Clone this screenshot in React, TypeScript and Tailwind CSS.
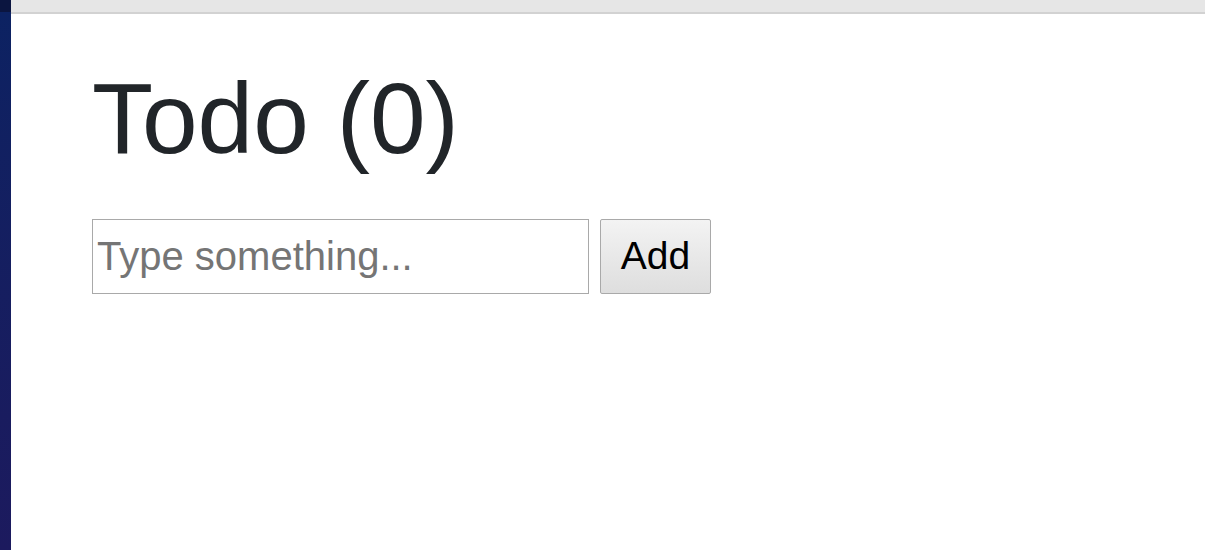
import { useState } from 'react';

// 간단한 Todo 화면 — 제목 + 입력 + 추가 버튼
export default function App(): JSX.Element {
  const [items, setItems] = useState<string[]>([]);
  const [text, setText] = useState<string>('');

  const handleAdd = (): void => {
    if (text.trim() === '') return;
    setItems([...items, text]);
    setText('');
  };

  return (
    <div className="flex w-[1205px] h-[550px] overflow-hidden bg-white font-['Liberation_Sans',Arial,sans-serif]">
      {/* 왼쪽 데스크톱 가장자리 */}
      <div className="w-[11px] shrink-0 flex flex-col">
        <div className="h-[12px] bg-[#0b1540]" />
        <div className="flex-1 bg-gradient-to-b from-[#0c2262] to-[#1c1a5e]" />
      </div>

      <div className="flex-1 flex flex-col">
        {/* 상단 브라우저 바 */}
        <div className="h-[12px] bg-[#e6e6e6]" />
        <div className="h-[2px] bg-[#d2d2d2]" />

        <main className="pl-[81px] pt-[54px]">
          <h1 className="text-[100px] leading-none text-[#212529]">
            Todo ({items.length})
          </h1>

          <div className="mt-[51px] flex items-center gap-[11px]">
            <input
              type="text"
              value={text}
              onChange={(e) => setText(e.target.value)}
              placeholder="Type something..."
              className="w-[497px] h-[75px] border border-[#a9a9a9] px-[4px] text-[40px] text-black placeholder:text-[#757575] outline-none"
            />
            <button
              type="button"
              onClick={handleAdd}
              className="w-[111px] h-[75px] border border-[#a9a9a9] rounded-[2px] bg-gradient-to-b from-[#f3f3f3] to-[#dedede] text-[39px] text-black"
            >
              Add
            </button>
          </div>

          <ul>
            {items.map((item, i) => (
              <li key={i}>{item}</li>
            ))}
          </ul>
        </main>
      </div>
    </div>
  );
}
